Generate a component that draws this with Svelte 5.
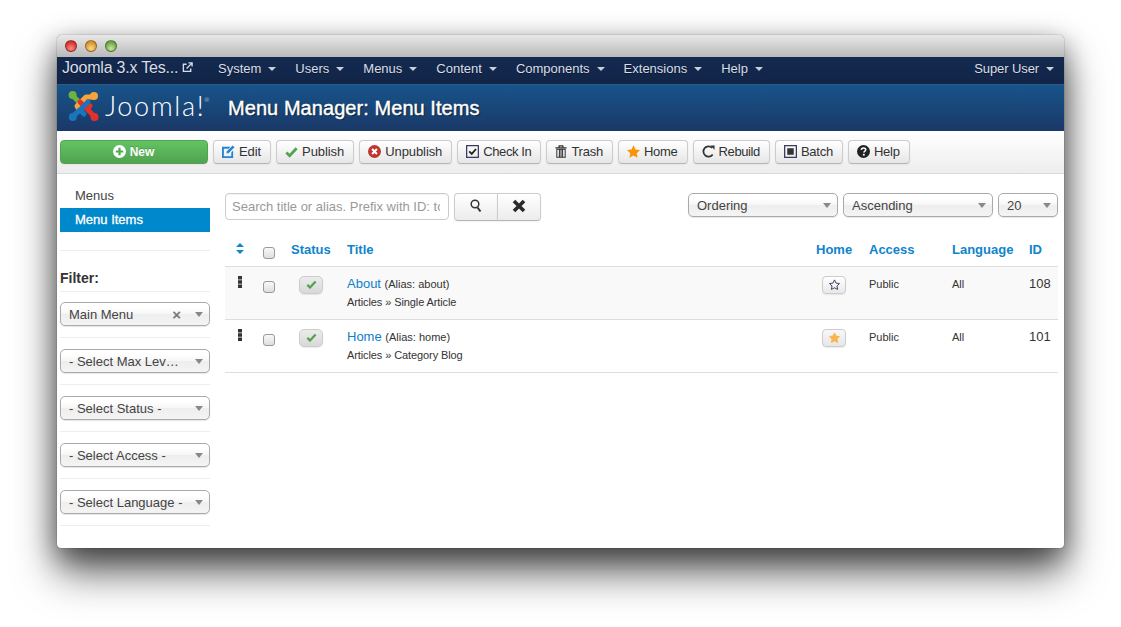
<script>
	const navItems = ['System', 'Users', 'Menus', 'Content', 'Components', 'Extensions', 'Help'];
	const filters = [
		{ label: 'Main Menu', clear: true },
		{ label: '- Select Max Lev…' },
		{ label: '- Select Status -' },
		{ label: '- Select Access -' },
		{ label: '- Select Language -' }
	];
	const rows = [
		{ title: 'About', alias: 'about', type: 'Single Article', home: false, id: 108 },
		{ title: 'Home', alias: 'home', type: 'Category Blog', home: true, id: 101 }
	];
</script>

<div class="page">
	<div class="window">
		<div class="titlebar">
			<i class="dot red"></i><i class="dot amber"></i><i class="dot green"></i>
		</div>

		<nav class="navbar">
			<span class="brand">Joomla 3.x Tes...
				<svg width="11" height="11" viewBox="0 0 12 12" fill="none" stroke="#d5dce6" stroke-width="1.5"><path d="M9.5 7v3.2h-8V2.5H5"/><path d="M5 7l5.5-5.5M7 1h4v4"/></svg>
			</span>
			<ul>
				{#each navItems as item}
					<li>{item}<b class="caret"></b></li>
				{/each}
			</ul>
			<span class="user">Super User<b class="caret"></b></span>
		</nav>

		<header class="head">
			<div class="logo">
				<svg width="31" height="32" viewBox="0 0 31 32" fill="none" stroke-width="5" stroke-linecap="round" stroke-linejoin="round">
					<path d="M5 6l7 7 3 3 3-3" stroke="#6cb33f"/>
					<circle cx="4.600" cy="5" r="4" fill="#6cb33f"/>
					<path d="M25 7l-7 0-7 7-2 2 2 3" stroke="#f6a33b"/>
					<circle cx="26" cy="6" r="4" fill="#f6a33b"/>
					<path d="M12 12l7 7 7 7" stroke="#e5302a"/>
					<path d="M19 19l3-3" stroke="#e5302a"/>
					<circle cx="26.500" cy="27" r="4" fill="#e5302a"/>
					<path d="M20 12l-8 8-7 6" stroke="#1b75bb"/>
					<path d="M12 20l4 4" stroke="#1b75bb"/>
					<circle cx="4.800" cy="27" r="4" fill="#1b75bb"/>
				</svg>
				<span class="wordmark">Joomla!<sup>®</sup></span>
			</div>
			<h1>Menu Manager: Menu Items</h1>
		</header>

		<div class="toolbar">
			<button class="btn new">
				<svg width="13" height="13" viewBox="0 0 14 14"><circle cx="7" cy="7" r="7" fill="#fff"/><path d="M7 3v8M3 7h8" stroke="#53a953" stroke-width="2.4"/></svg>
				New
			</button>
			<button class="btn">
				<svg width="13" height="13" viewBox="0 0 14 14"><path d="M0 2h9L7 4H2v8h8V8l2-2v8H0z" fill="#2384d3"/><path d="M5 7l6.500-6.500 2 2L7 9H5z" fill="#2384d3"/></svg>
				Edit
			</button>
			<button class="btn">
				<svg width="13" height="12" viewBox="0 0 14 12"><path d="M1.500 6.500L5 10l7.500-8" fill="none" stroke="#51a351" stroke-width="3"/></svg>
				Publish
			</button>
			<button class="btn">
				<svg width="13" height="13" viewBox="0 0 14 14"><circle cx="7" cy="7" r="7" fill="#bd362f"/><path d="M4.400 4.400l5.200 5.200M9.600 4.400l-5.200 5.200" stroke="#fff" stroke-width="2.200"/></svg>
				Unpublish
			</button>
			<button class="btn tight">
				<svg width="13" height="13" viewBox="0 0 14 14" fill="none"><rect x=".7" y=".7" width="12.600" height="12.600" stroke="#33335a" stroke-width="1.300"/><path d="M3.500 6.800l2.700 2.700 4.600-5.200" stroke="#222" stroke-width="2"/></svg>
				Check In
			</button>
			<button class="btn snug">
				<svg width="12" height="13" viewBox="0 0 12 14" fill="none" stroke="#333"><path d="M0 3h12M4 3V1h4v2" stroke-width="1.400"/><path d="M1.500 4.500h9V13.300h-9zM4.300 5v8M6 5v8M7.700 5v8" stroke-width="1.100"/></svg>
				Trash
			</button>
			<button class="btn snug">
				<svg width="13" height="13" viewBox="0 0 24 23"><path d="M12 0l3.700 7.600 8.300 1.200-6 5.900 1.400 8.300L12 19l-7.400 4L6 14.700 0 8.800l8.300-1.200z" fill="#f89406"/></svg>
				Home
			</button>
			<button class="btn tight">
				<svg width="13" height="13" viewBox="0 0 14 14" fill="none"><path d="M11.500 10.200A5.500 5.500 0 1 1 10.800 3" stroke="#333" stroke-width="1.900"/><path d="M9 .5h4.500V5z" fill="#333"/></svg>
				Rebuild
			</button>
			<button class="btn snug">
				<svg width="13" height="13" viewBox="0 0 14 14"><rect x=".7" y=".7" width="12.600" height="12.600" fill="none" stroke="#33335a" stroke-width="1.300"/><rect x="3.500" y="3.500" width="7" height="7" fill="#333"/></svg>
				Batch
			</button>
			<button class="btn snug">
				<svg width="13" height="13" viewBox="0 0 14 14"><circle cx="7" cy="7" r="7" fill="#222"/><path d="M4.600 5.300C4.800 3.800 5.800 3.200 7 3.200c1.400 0 2.400.8 2.400 2 0 1.600-2.100 1.600-2.100 3" fill="none" stroke="#fff" stroke-width="1.700"/><rect x="6.300" y="9.500" width="2" height="1.900" fill="#fff"/></svg>
				Help
			</button>
		</div>

		<div class="body">
			<aside>
				<a class="side-link" href="#menus">Menus</a>
				<a class="side-link active" href="#items">Menu Items</a>
				<hr class="first" />
				<h4>Filter:</h4>
				<hr class="under" />
				{#each filters as f}
					<div class="select">
						<span>{f.label}</span>
						{#if f.clear}<em class="clear">×</em>{/if}
						<b class="arrow"></b>
					</div>
					<hr />
				{/each}
			</aside>

			<main>
				<div class="tools">
					<input class="search" placeholder="Search title or alias. Prefix with ID: to" />
					<div class="group">
						<button class="btn square" aria-label="Search">
							<svg width="12" height="14" viewBox="0 0 12 14" fill="none" stroke="#333"><circle cx="5" cy="5" r="3.800" stroke-width="1.500"/><path d="M7.500 8.500l3 4" stroke-width="2"/></svg>
						</button>
						<button class="btn square" aria-label="Clear">
							<svg width="14" height="14" viewBox="0 0 14 14"><path d="M2 2l10 10M12 2L2 12" stroke="#2b2b2b" stroke-width="3.600"/></svg>
						</button>
					</div>
					<div class="spacer"></div>
					<div class="select order"><span>Ordering</span><b class="arrow"></b></div>
					<div class="select order"><span>Ascending</span><b class="arrow"></b></div>
					<div class="select limit"><span>20</span><b class="arrow"></b></div>
				</div>

				<table>
					<colgroup>
						<col class="c-sort" /><col class="c-check" /><col class="c-status" /><col />
						<col class="c-home" /><col class="c-access" /><col class="c-lang" /><col class="c-id" />
					</colgroup>
					<thead>
						<tr>
							<th class="center">
								<svg class="sort" width="8" height="11" viewBox="0 0 8 11"><path d="M4 0l4 4H0zM0 7h8l-4 4z" fill="#0e84cc"/></svg>
							</th>
							<th class="center"><input type="checkbox" /></th>
							<th>Status</th>
							<th>Title</th>
							<th>Home</th>
							<th>Access</th>
							<th>Language</th>
							<th>ID</th>
						</tr>
					</thead>
					<tbody>
						{#each rows as r, i}
							<tr class:odd={i === 0}>
								<td class="center">
									<svg class="grip" width="4" height="12" viewBox="0 0 4 12"><path d="M0 0h4v3.400H0zM0 4.300h4v3.400H0zM0 8.600h4V12H0z" fill="#333"/></svg>
								</td>
								<td class="center"><input type="checkbox" /></td>
								<td>
									<span class="state published">
										<svg width="11" height="9" viewBox="0 0 14 12"><path d="M1.500 6.500L5 10l7.500-8" fill="none" stroke="#51a351" stroke-width="3"/></svg>
									</span>
								</td>
								<td class="name">
									<a href="#item">{r.title}</a> <small>(Alias: {r.alias})</small>
									<div class="type">Articles » {r.type}</div>
								</td>
								<td>
									<span class="state star" class:on={r.home}>
										<svg width="11" height="11" viewBox="0 0 24 23"><path d="M12 1.500l3.300 6.900 7.500 1.100-5.400 5.300 1.300 7.500-6.700-3.600-6.700 3.600 1.300-7.500-5.400-5.300 7.500-1.100z" /></svg>
									</span>
								</td>
								<td class="small">Public</td>
								<td class="small">All</td>
								<td class="num">{r.id}</td>
							</tr>
						{/each}
					</tbody>
				</table>
			</main>
		</div>
	</div>
</div>

<style>
	:global(body) {
		background: #fff;
		font-family: 'Liberation Sans', Arial, sans-serif;
		font-size: 13px;
		color: #333;
	}
	.page {
		padding: 35px 57px 79px;
		height: 627px;
		box-sizing: border-box;
		overflow: hidden;
	}
	.window {
		height: 513px;
		background: #fff;
		border-radius: 5px 5px 4px 4px;
		box-shadow: 0 24px 42px rgba(0, 0, 0, 0.62), 0 8px 26px rgba(0, 0, 0, 0.4), 0 0 1px rgba(0, 0, 0, 0.8);
		overflow: hidden;
	}
	.titlebar {
		height: 22px;
		display: flex;
		align-items: center;
		gap: 8px;
		padding-left: 8px;
		background: linear-gradient(#e8e8e8, #b9b9b9);
	}
	.dot {
		width: 12px;
		height: 12px;
		border-radius: 50%;
		border: 1px solid rgba(0, 0, 0, 0.35);
		box-sizing: border-box;
	}
	.red { background: radial-gradient(circle at 50% 75%, #fb8a85, #d8322c 70%); }
	.amber { background: radial-gradient(circle at 50% 75%, #fbd98a, #d8922c 70%); }
	.green { background: radial-gradient(circle at 50% 75%, #c4e69a, #6aa547 70%); }

	.navbar {
		height: 27px;
		box-sizing: border-box;
		display: flex;
		align-items: center;
		background: linear-gradient(#13294f, #122548);
		color: #d9dee6;
		padding: 0 10px 5px 5px;
		text-shadow: 0 1px 0 rgba(0, 0, 0, 0.4);
	}
	.brand {
		width: 156px;
		font-size: 16px;
		letter-spacing: -0.2px;
		white-space: nowrap;
	}
	.brand svg {
		margin-left: -1px;
	}
	.navbar ul {
		display: flex;
		gap: 19px;
		margin: 0;
		padding: 0;
		list-style: none;
		flex: 1;
	}
	.user {
		letter-spacing: -0.1px;
	}
	.caret {
		display: inline-block;
		margin-left: 7px;
		vertical-align: 2px;
		border: 4px solid transparent;
		border-top-color: #c9cfd9;
		border-bottom: 0;
	}
	.head {
		height: 47px;
		display: flex;
		align-items: center;
		padding-left: 11px;
		background: linear-gradient(#17548a, #1a3867);
		border-top: 1px solid #2a5d8c;
		box-sizing: border-box;
	}
	.logo {
		width: 160px;
		display: flex;
		align-items: center;
		margin-top: -5px;
		color: #fff;
	}
	.wordmark {
		margin-left: 6px;
		font-family: Lato, sans-serif;
		font-weight: 300;
		font-size: 27px;
		line-height: 30px;
		letter-spacing: 1.7px;
		white-space: nowrap;
	}
	.wordmark sup {
		font-size: 6px;
		vertical-align: 14px;
		line-height: 0;
		margin-left: -1px;
	}
	h1 {
		margin: 0;
		font-size: 20px;
		font-weight: 400;
		color: #fff;
		-webkit-text-stroke: 0.4px #fff;
		letter-spacing: 0.06px;
		text-shadow: 1px 1px 1px rgba(0, 0, 0, 0.6);
	}
	.toolbar {
		height: 43px;
		box-sizing: border-box;
		display: flex;
		gap: 5px;
		align-items: flex-start;
		padding: 9px 3px 0;
		background: linear-gradient(#fff, #ededed);
		border-bottom: 1px solid #d9d9d9;
	}
	.btn {
		height: 24px;
		padding: 0 9px 1px 8px;
		display: inline-flex;
		align-items: center;
		justify-content: center;
		gap: 4px;
		font: 13px 'Liberation Sans', Arial, sans-serif;
		letter-spacing: -0.08px;
		color: #333;
		background: linear-gradient(#fff, #e6e6e6);
		border: 1px solid #ccc;
		border-bottom-color: #b5b5b5;
		border-radius: 4px;
		box-shadow: 0 1px 2px rgba(0, 0, 0, 0.05);
	}
	.tight {
		letter-spacing: -0.4px;
	}
	.snug {
		letter-spacing: -0.25px;
	}
	.new {
		width: 148px;
		color: #fff;
		font-weight: 700;
		font-size: 12px;
		letter-spacing: 0;
		background: linear-gradient(#62c462, #51a351);
		border-color: #51a351;
		text-shadow: 0 -1px 0 rgba(0, 0, 0, 0.2);
	}
	.body {
		display: flex;
		padding: 0 6px 0 3px;
	}
	aside {
		width: 150px;
		flex: none;
		padding-top: 10px;
	}
	.side-link {
		display: block;
		height: 24px;
		line-height: 24px;
		padding-left: 15px;
		color: #444;
		text-decoration: none;
	}
	.active {
		background: #0088cc;
		color: #fff;
		font-weight: 400;
		-webkit-text-stroke: 0.3px #fff;
	}
	hr {
		margin: 11px 0 11px;
		border: 0;
		border-top: 1px solid #eee;
	}
	hr.first {
		margin: 18px 0 0;
	}
	h4 {
		margin: 19px 0 0;
		font-size: 14px;
		line-height: 16px;
		color: #333;
	}
	hr.under {
		margin: 5px 0 10px;
	}
	.select {
		height: 24px;
		box-sizing: border-box;
		display: flex;
		align-items: center;
		padding: 0 8px;
		border: 1px solid #aaa;
		border-radius: 5px;
		background: linear-gradient(#fff 20%, #f6f6f6 50%, #eee 52%, #f4f4f4);
		box-shadow: 0 1px 1px rgba(0, 0, 0, 0.1);
		color: #444;
		white-space: nowrap;
	}
	.select span {
		flex: 1;
		overflow: hidden;
	}
	.arrow {
		flex: none;
		margin-left: 6px;
		margin-right: -2px;
		border: 5px solid transparent;
		border-top-color: #888;
		border-bottom: 0;
		border-left-width: 4px;
		border-right-width: 4px;
		border-top-width: 5px;
	}
	.clear {
		font-style: normal;
		font-weight: 700;
		font-size: 15px;
		line-height: 1;
		color: #777;
		margin-right: 8px;
	}
	main {
		flex: 1;
		padding: 19px 0 0 15px;
		min-width: 0;
	}
	.tools {
		display: flex;
		align-items: flex-start;
		gap: 5px;
	}
	.search {
		width: 224px;
		height: 27px;
		box-sizing: border-box;
		padding: 0 8px 0 6px;
		border: 1px solid #ccc;
		border-radius: 4px;
		font: 13px 'Liberation Sans', Arial, sans-serif;
		box-shadow: inset 0 1px 1px rgba(0, 0, 0, 0.05);
	}
	.search::placeholder {
		color: #999;
	}
	.group {
		display: flex;
	}
	.square {
		width: 44px;
		height: 28px;
		padding: 0 0 3px;
		border-radius: 4px 0 0 4px;
		background: linear-gradient(#fff, #ececec);
	}
	.square + .square {
		margin-left: -1px;
		border-radius: 0 4px 4px 0;
	}
	.spacer {
		flex: 1;
	}
	.order {
		width: 150px;
	}
	.limit {
		width: 60px;
	}
	table {
		width: 100%;
		table-layout: fixed;
		border-collapse: collapse;
		margin-top: 12px;
	}
	.c-sort { width: 30px; }
	.c-check { width: 28px; }
	.c-status { width: 56px; }
	.c-home { width: 53px; }
	.c-access { width: 83px; }
	.c-lang { width: 77px; }
	.c-id { width: 37px; }
	thead tr {
		height: 33px;
	}
	th {
		padding: 0 0 0 8px;
		text-align: left;
		color: #0e84cc;
		font-size: 13px;
		border-bottom: 1px solid #ddd;
	}
	td {
		box-sizing: border-box;
		padding: 9px 0 0 8px;
		height: 53px;
		vertical-align: top;
		border-bottom: 1px solid #ddd;
	}
	.center {
		padding-left: 0;
		text-align: center;
	}
	.odd td {
		background: #f9f9f9;
	}
	input[type='checkbox'] {
		appearance: none;
		width: 12px;
		height: 12px;
		margin: 5px 0 0;
		display: inline-block;
		vertical-align: top;
		border: 1px solid #9a9a9a;
		border-radius: 3px;
		background: linear-gradient(#f8f8f8, #dedede);
		box-sizing: border-box;
	}
	th input[type='checkbox'] {
		margin-top: 7px;
	}
	.sort {
		vertical-align: 0;
	}
	.grip {
		display: inline-block;
	}
	.state {
		display: flex;
		align-items: center;
		justify-content: center;
		width: 24px;
		height: 18px;
		box-sizing: border-box;
		border: 1px solid #ccc;
		border-radius: 4px;
		box-shadow: 0 1px 1px rgba(0, 0, 0, 0.08);
	}
	.published {
		margin-left: 8px;
		background: linear-gradient(#ececec, #d8d8d8);
		border-radius: 5px;
	}
	.star {
		background: linear-gradient(#fff, #e8e8e8);
		margin-left: 6px;
	}
	.star svg {
		fill: none;
		stroke: #33335a;
		stroke-width: 2;
	}
	.star.on {
		background: linear-gradient(#f8f8f8, #e6e6e6);
	}
	.star.on svg {
		fill: #fbb450;
		stroke: #fbb450;
	}
	.name a {
		color: #0e7fc8;
		text-decoration: none;
		font-size: 13px;
	}
	small {
		font-size: 11px;
		color: #333;
	}
	.type {
		font-size: 11px;
		margin-top: 5px;
		color: #333;
		letter-spacing: -0.1px;
	}
	.small {
		font-size: 11px;
		padding-top: 11px;
	}
	.num {
		font-size: 13px;
		padding-top: 9px;
		white-space: nowrap;
	}
</style>
